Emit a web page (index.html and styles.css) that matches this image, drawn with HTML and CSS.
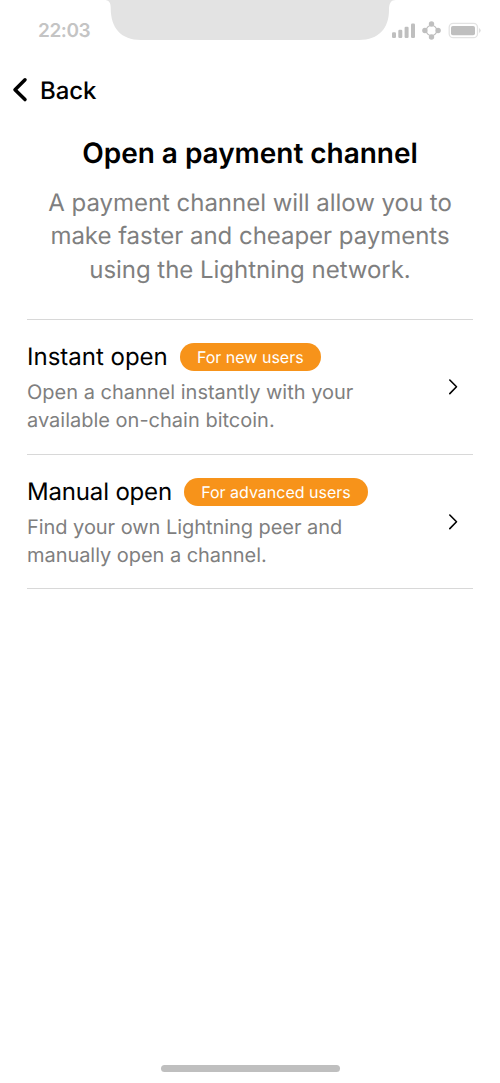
FILE: index.html
```html
<!DOCTYPE html>
<html lang="en">
<head>
<meta charset="utf-8">
<title>Open a payment channel</title>
<link rel="stylesheet" href="styles.css">
</head>
<body>
<main class="screen">
  <header class="status">
    <span class="time">22:03</span>
    <svg class="notch" width="292" height="40" viewBox="0 0 292 40"><path d="M0 0C5 0 6.700 2.500 6.700 8C6.700 28 17 40 37 40H255C275 40 285 28 285 10C285 3 287 0 292 0Z"/></svg>
    <svg class="indicators" width="90" height="20" viewBox="0 0 90 20">
      <rect x="0" y="12.200" width="4" height="5.800" rx="1.200"/><rect x="6.300" y="9.800" width="4" height="8.200" rx="1.200"/><rect x="12.600" y="6.700" width="4" height="11.300" rx="1.200"/><rect x="19" y="3.500" width="4" height="14.500" rx="1.200"/>
      <circle class="line" cx="39.500" cy="10.500" r="5.200"/><circle cx="39.500" cy="4" r="2.700"/><circle cx="39.500" cy="17" r="2.700"/><circle cx="32.900" cy="10.500" r="2.700"/><circle cx="46.100" cy="10.500" r="2.700"/>
      <rect class="line thin" x="57.200" y="3.300" width="28.300" height="14.400" rx="4"/><rect x="59" y="6" width="24" height="9.200" rx="1.800"/><path class="tip" d="M87 8q3.500 2.500 0 5z"/>
    </svg>
  </header>
  <nav class="back"><svg width="16" height="26" viewBox="0 0 16 26"><path d="M13 2.800L3 12.700L13 22.600"/></svg><span>Back</span></nav>
  <section class="intro">
    <h1>Open a payment channel</h1>
    <p>A payment channel will allow you to<br>make faster and cheaper payments<br>using the Lightning network.</p>
  </section>
  <section class="options">
    <article class="option"><div>
      <div class="heading"><h2>Instant open</h2><span class="badge new">For new users</span></div>
      <p>Open a channel instantly with your<br>available on-chain bitcoin.</p></div>
      <svg class="chevron" width="10" height="18" viewBox="0 0 10 18"><path d="M1.800 2L8.500 8.800L1.800 15.600"/></svg>
    </article>
    <article class="option"><div>
      <div class="heading"><h2 class="manual">Manual open</h2><span class="badge advanced">For advanced users</span></div>
      <p class="manual-copy">Find your own Lightning peer and<br>manually open a channel.</p></div>
      <svg class="chevron" width="10" height="18" viewBox="0 0 10 18"><path d="M1.800 2L8.500 8.800L1.800 15.600"/></svg>
    </article>
  </section>
  <div class="home"></div>
</main>
</body>
</html>
```

FILE: styles.css
```css
* { box-sizing: border-box; }
body, h1, h2, p { margin: 0; }
body { background: #fff; color: #000; font-family: Inter, sans-serif; text-rendering: geometricPrecision; }
.screen { width: 500px; height: 1083px; display: flex; flex-direction: column; }
.status { height: 60px; display: flex; align-items: flex-start; }
.time { width: 104px; padding: 18px 0 0 38px; font-size: 19px; line-height: 25px; font-weight: 600; letter-spacing: -.45px; color: #c4c4c4; }
.notch { fill: #e3e3e3; }
.indicators { margin: 20px 0 0 -4px; fill: #bfbfbf; }
.line { fill: none; stroke: #bfbfbf; stroke-width: 1.2; }
.thin { stroke: #e3e3e3; stroke-width: 1.3; }
.tip { fill: #dedede; }
.back { height: 60px; display: flex; align-items: center; padding-left: 12px; gap: 12px; font-size: 24px; font-weight: 500; letter-spacing: -.1px; }
.back svg { fill: none; stroke: #000; stroke-width: 3.500; stroke-linecap: round; stroke-linejoin: round; }
.intro { height: 199px; padding-top: 16px; text-align: center; }
.intro h1 { font-size: 28px; line-height: 34px; font-weight: 600; letter-spacing: -.03px; }
.intro p { margin-top: 16px; font-size: 24px; line-height: 33.300px; letter-spacing: -.03px; color: #7f7f7f; }
.options { margin: 0 27px; border-top: 1px solid #d8d8d8; }
.option { height: 134.700px; border-bottom: 1px solid #d8d8d8; display: flex; align-items: center; justify-content: space-between; padding: 2px 15px 0 0; }
.heading { display: flex; align-items: center; gap: 12px; height: 30px; }
h2 { font-size: 24px; line-height: 30px; font-weight: 400; }
.manual { letter-spacing: -.17px; }
.badge { height: 28px; border-radius: 14px; background: #f7931a; color: #fff; font-size: 16px; line-height: 28px; text-align: center; }
.new { width: 141px; }
.advanced { width: 184px; }
.option p { margin-top: 6px; font-size: 20px; line-height: 28px; color: #7f7f7f; }
.option .manual-copy { letter-spacing: -.05px; }
.chevron { margin-top: -2px; fill: none; stroke: #000; stroke-width: 1.600; stroke-linecap: round; stroke-linejoin: round; }
.home { width: 179px; height: 7px; border-radius: 4px; background: #bfbfbf; margin: auto auto 11px 161px; }
```
